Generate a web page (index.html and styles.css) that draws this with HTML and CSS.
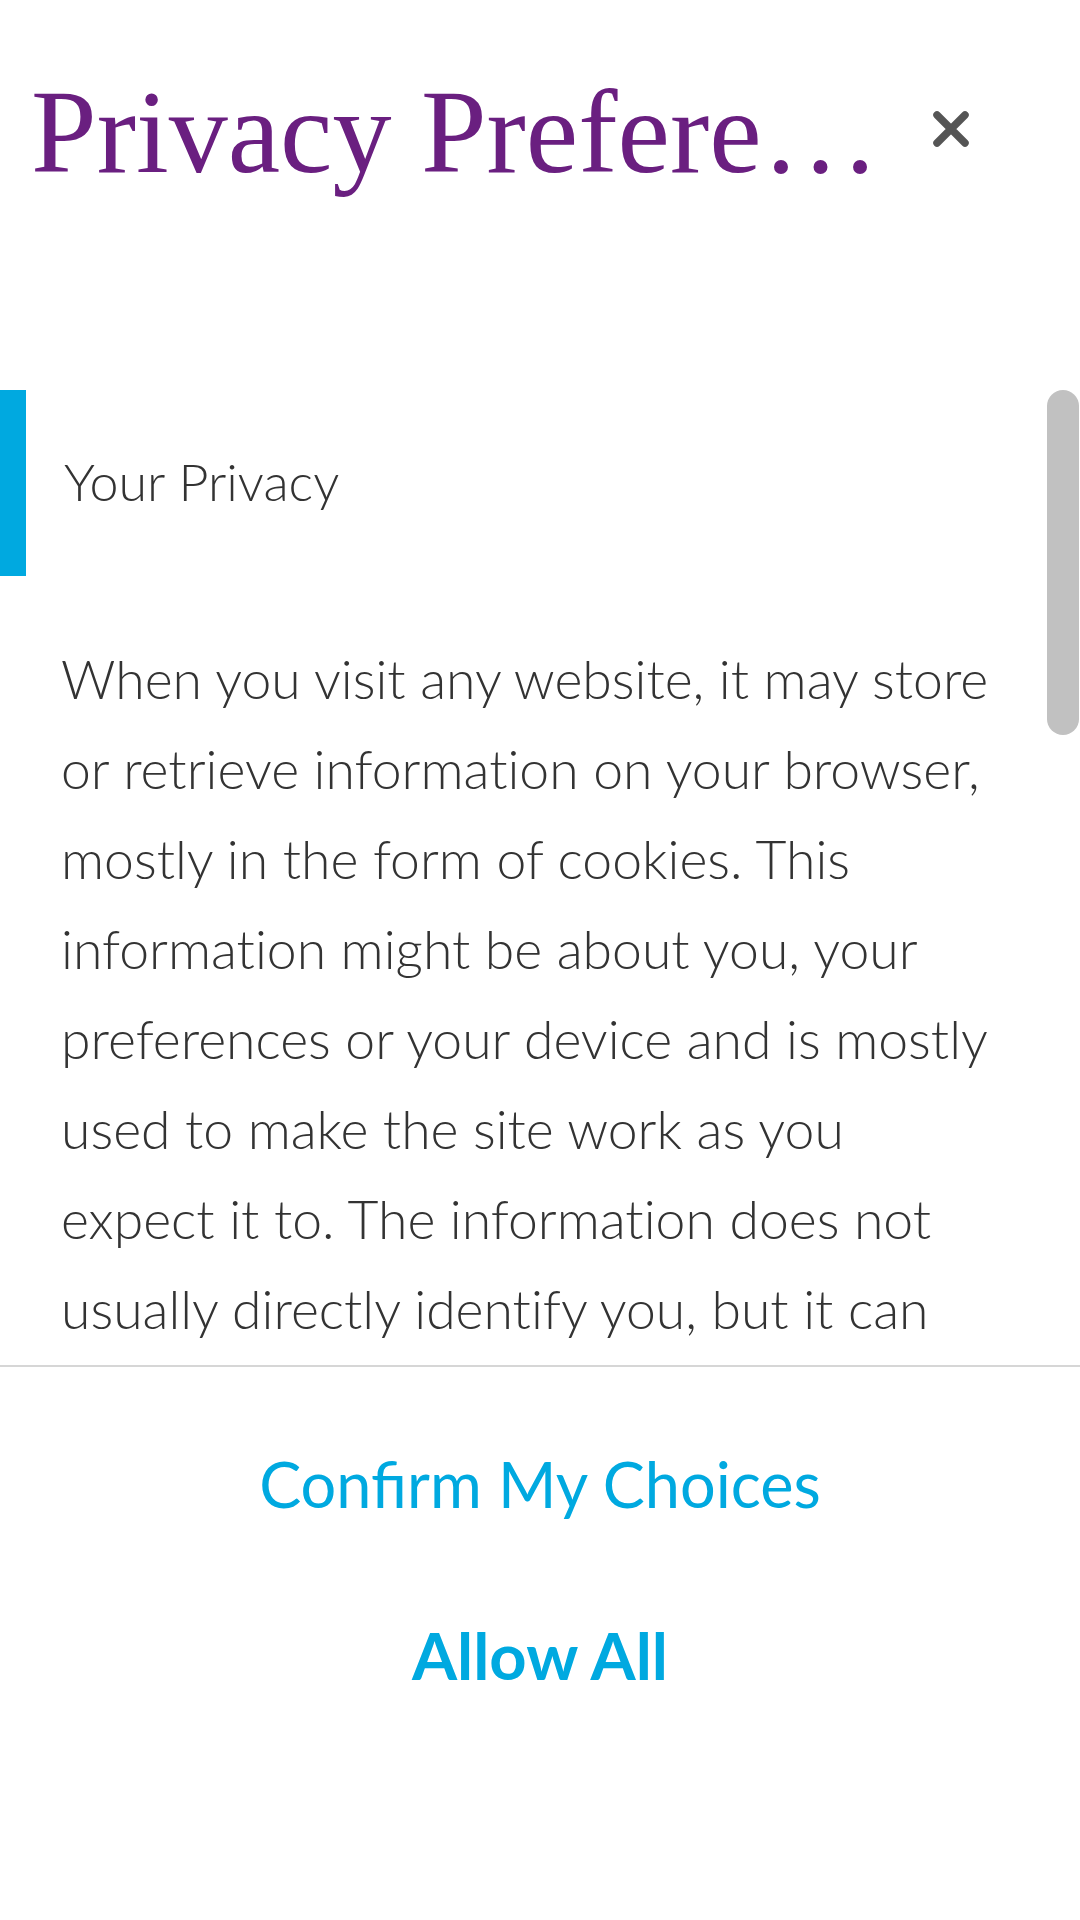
FILE: index.html
```html
<!DOCTYPE html>
<html lang="en">
<head>
  <meta charset="UTF-8">
  <meta name="viewport" content="width=device-width, initial-scale=1.0">
  <title>Privacy Preference Center</title>
  <link rel="stylesheet" href="styles.css">
</head>
<body>

  <!-- Header -->
  <header class="pc-header">
    <h1 class="pc-title">Privacy Preference Center</h1>
    <button class="pc-close" type="button" aria-label="Close">
      <svg width="36" height="36" viewBox="0 0 36 36">
        <path d="M4 4 L32 32 M32 4 L4 32" stroke="#555" stroke-width="7.5" stroke-linecap="round" fill="none"/>
      </svg>
    </button>
  </header>

  <!-- Scrollable content -->
  <div class="pc-content">
    <h2 class="pc-section-title">Your Privacy</h2>
    <p class="pc-text">When you visit any website, it may store or retrieve information on your browser, mostly in the form of cookies. This information might be about you, your preferences or your device and is mostly used to make the site work as you expect it to. The information does not usually directly identify you, but it can give you a more personalized web experience.</p>
    <div class="pc-scroll-thumb"></div>
  </div>

  <!-- Footer buttons -->
  <footer class="pc-footer">
    <button class="pc-btn" type="button">Confirm My Choices</button>
    <button class="pc-btn pc-btn-strong" type="button">Allow All</button>
  </footer>

</body>
</html>
```

FILE: styles.css
```css
* {
  box-sizing: border-box;
  margin: 0;
  padding: 0;
}

body {
  font-family: Lato, "Open Sans", sans-serif;
  font-variant-ligatures: no-common-ligatures;
  background-color: #fff;
  color: #333;
  width: 1080px;
  height: 1920px;
  overflow: hidden;
}

/* Header */
.pc-header {
  display: flex;
  padding: 65px 79px 0 31px;
}

.pc-title {
  flex: 1;
  min-width: 0;
  font-family: "Liberation Serif", serif;
  font-weight: 400;
  font-size: 118px;
  line-height: 136px;
  color: #6a1f80;
  white-space: nowrap;
  overflow: hidden;
  text-overflow: ellipsis;
}

.pc-close {
  width: 100px;
  height: 60px;
  margin-top: 34px;
  background: none;
  border: none;
  display: flex;
  align-items: center;
  justify-content: center;
  cursor: pointer;
}

/* Content */
.pc-content {
  position: relative;
  height: 1164px;
  padding-top: 189px;
  overflow: hidden;
}

.pc-section-title {
  display: flex;
  align-items: center;
  height: 186px;
  padding-bottom: 4px;
  border-left: 26px solid #00a9e0;
  padding-left: 38px;
  font-size: 52px;
  font-weight: 300;
  color: #333;
}

.pc-text {
  margin-top: 57px;
  padding: 0 84px 0 61px;
  font-size: 53.5px;
  font-weight: 300;
  line-height: 90px;
}

.pc-scroll-thumb {
  position: absolute;
  top: 189px;
  right: 1px;
  width: 32px;
  height: 345px;
  border-radius: 16px;
  background-color: #c1c1c1;
}

/* Footer */
.pc-footer {
  position: relative;
  background-color: #fff;
  border-top: 2px solid #d6d6d6;
  padding-top: 30px;
  display: flex;
  flex-direction: column;
}

.pc-btn {
  height: 172px;
  background: none;
  border: none;
  font-family: Lato, "Open Sans", sans-serif;
  font-size: 63px;
  font-weight: 400;
  color: #00a9e0;
  cursor: pointer;
}

.pc-btn-strong {
  font-size: 65px;
  font-weight: 700;
}
```
